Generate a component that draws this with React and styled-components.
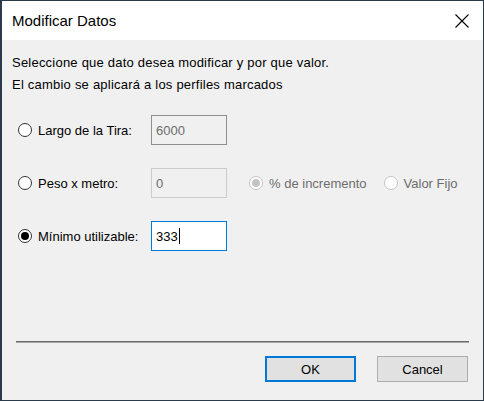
import React from 'react';
import styled, { createGlobalStyle, css } from 'styled-components';

const GlobalStyle = createGlobalStyle`
  html, body {
    margin: 0;
    padding: 0;
    background: #f0f0f0;
  }
  * {
    box-sizing: border-box;
  }
`;

// Window frame
const Window = styled.div`
  width: 484px;
  height: 401px;
  display: flex;
  flex-direction: column;
  border: 1px solid #2c3b4c;
  border-left-width: 2px;
  background: #f0f0f0;
  font-family: "Liberation Sans", Arial, sans-serif;
  font-size: 13px;
  color: #000;
`;

const TitleBar = styled.div`
  height: 39px;
  flex: none;
  display: flex;
  align-items: center;
  justify-content: space-between;
  padding: 0 14px 0 10px;
  background: #fff;
`;

const Title = styled.span`
  font-size: 15px;
  color: #000;
`;

const CloseButton = styled.div`
  width: 14px;
  height: 14px;
  display: flex;
  svg {
    display: block;
  }
`;

// Body
const Body = styled.div`
  flex: 1;
  display: flex;
  flex-direction: column;
  padding: 12px 0 0 10px;
`;

const Intro = styled.p`
  margin: 0;
  line-height: 22px;
  letter-spacing: 0.22px;
`;

const Options = styled.div`
  display: flex;
  flex-direction: column;
  gap: 23px;
  margin: 19px 0 0 6px;
`;

const Row = styled.div`
  display: grid;
  grid-template-columns: 133px 76px auto;
  align-items: center;
  height: 30px;
`;

const RadioLabel = styled.label`
  display: flex;
  align-items: center;
  gap: 6px;
  color: ${p => (p.$disabled ? '#6d6d6d' : '#000')};
  white-space: nowrap;
`;

const RadioCircle = styled.span`
  width: 14px;
  height: 14px;
  flex: none;
  border-radius: 50%;
  border: 1px solid ${p => (p.$disabled ? '#c4c4c4' : '#333')};
  background: #fff;
  display: flex;
  align-items: center;
  justify-content: center;
  &::after {
    content: '';
    width: 8px;
    height: 8px;
    border-radius: 50%;
    background: ${p => (p.$disabled ? '#c4c4c4' : '#000')};
    display: ${p => (p.$checked ? 'block' : 'none')};
  }
`;

const TextBox = styled.div`
  height: 30px;
  display: flex;
  align-items: center;
  padding-left: 4px;
  ${p =>
    p.$variant === 'focused'
      ? css`
          border: 1px solid #0078d7;
          background: #fff;
          color: #000;
        `
      : css`
          border: 1px solid ${p.$variant === 'light' ? '#cccccc' : '#8f8f8f'};
          background: #f0f0f0;
          color: #6d6d6d;
        `}
`;

const Caret = styled.span`
  width: 1px;
  height: 16px;
  background: #000;
  margin-left: 1px;
`;

const RadioGroup = styled.div`
  display: flex;
  align-items: center;
  gap: 17px;
  margin-left: 22px;
`;

// Footer
const Footer = styled.div`
  flex: none;
  padding: 0 14px 18px 14px;
`;

const Separator = styled.div`
  height: 2px;
  background: #6b6b6b;
  border-bottom: 1px solid #a8a8a8;
`;

const Buttons = styled.div`
  display: flex;
  justify-content: flex-end;
  gap: 21px;
  margin-top: 13px;
  padding-right: 1px;
`;

const Button = styled.button`
  width: 91px;
  height: 26px;
  font-family: inherit;
  font-size: 13px;
  color: #000;
  background: #e1e1e1;
  border: ${p => (p.$default ? '2px solid #0078d7' : '1px solid #adadad')};
  padding: 0;
`;

const Radio = ({ checked, disabled, children }) => (
  <RadioLabel $disabled={disabled}>
    <RadioCircle $checked={checked} $disabled={disabled} />
    {children}
  </RadioLabel>
);

export default function App() {
  return (
    <>
      <GlobalStyle />
      <Window>
        <TitleBar>
          <Title>Modificar Datos</Title>
          <CloseButton>
            <svg width="14" height="14" viewBox="0 0 14 14">
              <path d="M0.5 0.5 L13.5 13.5 M13.5 0.5 L0.5 13.5" stroke="#000" strokeWidth="1.1" fill="none" />
            </svg>
          </CloseButton>
        </TitleBar>
        <Body>
          <Intro>
            Seleccione que dato desea modificar y por que valor.
            <br />
            El cambio se aplicará a los perfiles marcados
          </Intro>
          <Options>
            <Row>
              <Radio>Largo de la Tira:</Radio>
              <TextBox $variant="dark">6000</TextBox>
            </Row>
            <Row>
              <Radio>Peso x metro:</Radio>
              <TextBox $variant="light">0</TextBox>
              <RadioGroup>
                <Radio checked disabled>% de incremento</Radio>
                <Radio disabled>Valor Fijo</Radio>
              </RadioGroup>
            </Row>
            <Row>
              <Radio checked>Mínimo utilizable:</Radio>
              <TextBox $variant="focused">
                333
                <Caret />
              </TextBox>
            </Row>
          </Options>
        </Body>
        <Footer>
          <Separator />
          <Buttons>
            <Button $default>OK</Button>
            <Button>Cancel</Button>
          </Buttons>
        </Footer>
      </Window>
    </>
  );
}
